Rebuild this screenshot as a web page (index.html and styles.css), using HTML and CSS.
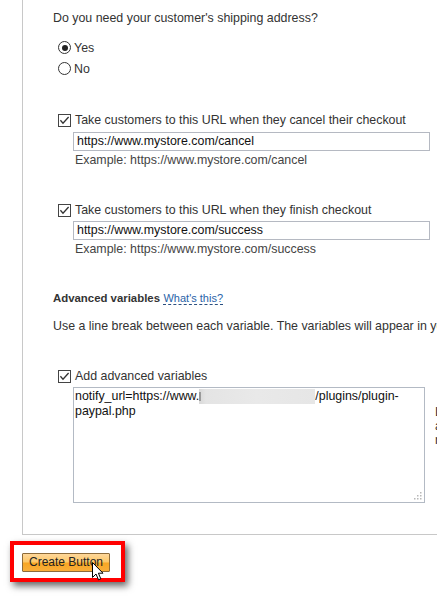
FILE: index.html
```html
<!DOCTYPE html>
<html>
<head>
<meta charset="utf-8">
<link rel="stylesheet" href="styles.css">
</head>
<body>
<div class="page">
  <div class="panel">
    <div class="question">Do you need your customer's shipping address?</div>
    <div class="radios">
      <div class="radio-row"><span class="radio checked"></span><span class="radio-label">Yes</span></div>
      <div class="radio-row"><span class="radio"></span><span class="radio-label">No</span></div>
    </div>

    <div class="option first">
      <div class="check-row">
        <span class="checkbox"><svg viewBox="0 0 13 13" width="13" height="13"><path d="M2.4 6.2 L5 9.2 L10.6 3" fill="none" stroke="#333" stroke-width="1.3"/></svg></span>
        <span class="check-label">Take customers to this URL when they cancel their checkout</span>
      </div>
      <div class="field">https://www.mystore.com/cancel</div>
      <div class="example">Example: https://www.mystore.com/cancel</div>
    </div>

    <div class="option second">
      <div class="check-row">
        <span class="checkbox"><svg viewBox="0 0 13 13" width="13" height="13"><path d="M2.4 6.2 L5 9.2 L10.6 3" fill="none" stroke="#333" stroke-width="1.3"/></svg></span>
        <span class="check-label">Take customers to this URL when they finish checkout</span>
      </div>
      <div class="field field-second">https://www.mystore.com/success</div>
      <div class="example">Example: https://www.mystore.com/success</div>
    </div>

    <div class="adv-heading"><span class="adv-title">Advanced variables</span> <span class="whats">What's this?</span></div>
    <div class="adv-note">Use a line break between each variable. The variables will appear in your button's HTML code.</div>

    <div class="check-row adv-check">
      <span class="checkbox"><svg viewBox="0 0 13 13" width="13" height="13"><path d="M2.4 6.2 L5 9.2 L10.6 3" fill="none" stroke="#333" stroke-width="1.3"/></svg></span>
      <span class="check-label">Add advanced variables</span>
    </div>
    <div class="adv-row">
      <div class="textarea">notify_url=https://www.<span class="blurred"><span class="blur-char"></span></span>/plugins/plugin-<br>paypal.php<span class="grip"><svg viewBox="0 0 8 8" width="8" height="8"><rect x="6" y="0" width="1.5" height="1.5" fill="#b8b8b8"/><rect x="3" y="3" width="1.5" height="1.5" fill="#b8b8b8"/><rect x="6" y="3" width="1.5" height="1.5" fill="#b8b8b8"/><rect x="0" y="6" width="1.5" height="1.5" fill="#b8b8b8"/><rect x="3" y="6" width="1.5" height="1.5" fill="#b8b8b8"/><rect x="6" y="6" width="1.5" height="1.5" fill="#b8b8b8"/></svg></span></div>
      <div class="side-note">Learn<br>about<br>names</div>
    </div>
  </div>

  <div class="actions">
    <div class="highlight">
      <button class="create-btn">Create Button</button>
    </div>
  </div>

  <svg class="cursor" viewBox="0 0 13 19" width="13" height="19"><path d="M0.5 0.5 L0.5 15.5 L4 12 L6.5 17.8 L8.8 16.8 L6.4 11.2 L11 11.2 Z" fill="#fff" stroke="#000" stroke-width="1" stroke-linejoin="miter"/></svg>
</div>
</body>
</html>
```
FILE: styles.css
```css
html, body {
  margin: 0;
  padding: 0;
  background: #fff;
}
body {
  width: 437px;
  height: 603px;
  overflow: hidden;
  font-family: "Liberation Sans", Arial, sans-serif;
  font-size: 12.4px;
  color: #333;
}
.page {
  position: relative;
  width: 437px;
  height: 603px;
}
.panel {
  box-sizing: border-box;
  margin-left: 22px;
  width: 480px;
  height: 535px;
  border-left: 1px solid #c8c8c8;
  border-bottom: 1px solid #c8c8c8;
  padding: 10px 0 0 30px;
}
.question {
  line-height: 16px;
}
.radios {
  margin-top: 11px;
  margin-left: 5px;
}
.radio-row {
  height: 21px;
  display: flex;
  align-items: center;
}
.radio {
  box-sizing: border-box;
  width: 13px;
  height: 13px;
  border: 1px solid #333;
  border-radius: 50%;
  display: flex;
  align-items: center;
  justify-content: center;
  background: #fff;
}
.radio.checked::after {
  content: "";
  width: 6px;
  height: 6px;
  border-radius: 50%;
  background: #222;
}
.radio-label {
  margin-left: 3px;
}
.option.first {
  margin-top: 33px;
}
.option.second {
  margin-top: 34px;
}
.check-row {
  height: 16px;
  display: flex;
  align-items: center;
  margin-left: 5px;
}
.checkbox {
  box-sizing: border-box;
  width: 13px;
  height: 13px;
  border: 1px solid #444;
  background: #fff;
  position: relative;
  display: block;
}
.checkbox svg {
  position: absolute;
  left: -1px;
  top: -1px;
}
.check-label {
  margin-left: 4px;
  white-space: nowrap;
}
.field {
  box-sizing: border-box;
  margin: 4px 0 0 20px;
  width: 357px;
  height: 19px;
  border: 1px solid #b5b9c2;
  padding: 0 3px;
  line-height: 17px;
  color: #111;
  white-space: nowrap;
}
.field-second {
  margin-top: 3px;
}
.example {
  margin: 1px 0 0 22px;
  line-height: 16px;
  color: #444;
  white-space: nowrap;
}
.adv-heading {
  margin-top: 33px;
  line-height: 16px;
  white-space: nowrap;
}
.adv-title {
  font-weight: bold;
  font-size: 11.4px;
  color: #333;
}
.whats {
  font-size: 11px;
  color: #2a63a8;
  border-bottom: 1px dashed #2a4f80;
}
.adv-note {
  margin-top: 12px;
  line-height: 16px;
  white-space: nowrap;
}
.adv-check {
  margin-top: 34px;
}
.adv-row {
  display: flex;
  align-items: flex-start;
  margin-top: 3px;
}
.textarea {
  position: relative;
  box-sizing: border-box;
  margin-left: 20px;
  width: 352px;
  height: 116px;
  border: 1px solid #b3bac4;
  padding: 1px 1px;
  line-height: 14px;
  color: #111;
  white-space: nowrap;
}
.blurred {
  display: inline-block;
  vertical-align: top;
  width: 116px;
  height: 15px;
  background: linear-gradient(to right, #d8d8d8 0, #e4e4e4 6%, #e9e9e9 50%, #e6e6e6 100%);
  position: relative;
}
.blur-char {
  position: absolute;
  left: 0;
  top: 3px;
  width: 2px;
  height: 9px;
  background: #9a9a9a;
}
.grip {
  position: absolute;
  right: 2px;
  bottom: 2px;
  width: 8px;
  height: 8px;
  line-height: 0;
}
.side-note {
  margin-left: 10px;
  margin-top: 18px;
  line-height: 14px;
  color: #333;
}
.actions {
  margin: 6px 0 0 10px;
  display: flex;
}
.highlight {
  border: 4px solid #f00;
  padding: 8px 11px 6px 8px;
  box-shadow: 3px 4px 7px rgba(0, 0, 0, 0.6);
  display: flex;
}
.create-btn {
  box-sizing: border-box;
  width: 88px;
  height: 19px;
  margin: 0;
  padding: 0;
  border: 1px solid #8d6b3a;
  border-radius: 1px;
  background: linear-gradient(#fed79a 0%, #fdc767 48%, #f8a623 52%, #f9ae3a 100%);
  font-family: "Liberation Sans", Arial, sans-serif;
  font-size: 12px;
  color: #222;
  line-height: 17px;
}
.cursor {
  position: absolute;
  left: 92px;
  top: 562px;
}
```
